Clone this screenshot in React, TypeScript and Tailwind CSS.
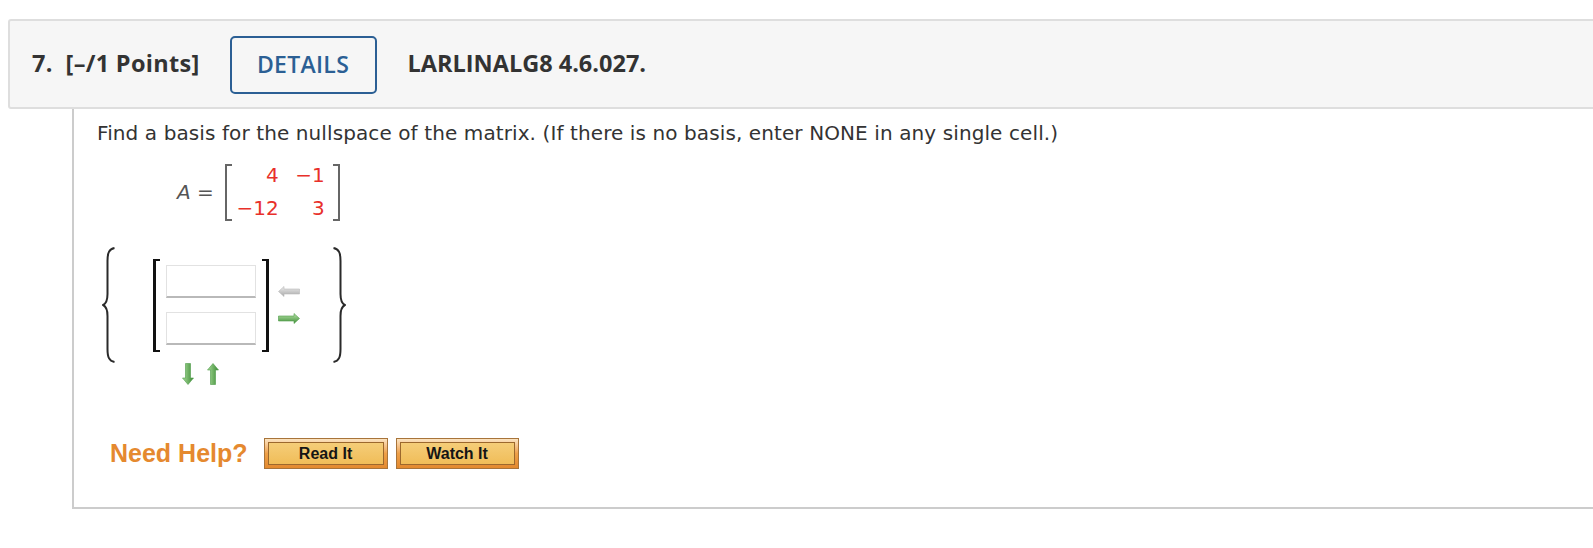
import React from "react";

function LeftBrace() {
  return (
    <svg width="14" height="116" viewBox="0 0 14 116" className="block">
      <path
        d="M12.5,1 C7,2 5.5,6 5.5,14 L5.5,47 C5.5,54 4,56.5 1.2,58 C4,59.5 5.5,62 5.5,69 L5.5,102 C5.5,110 7,114 12.5,115"
        fill="none"
        stroke="#2a2a2a"
        strokeWidth="2"
      />
    </svg>
  );
}

function RightBrace() {
  return (
    <svg width="14" height="116" viewBox="0 0 14 116" className="block">
      <path
        d="M1.5,1 C7,2 8.5,6 8.5,14 L8.5,47 C8.5,54 10,56.5 12.8,58 C10,59.5 8.5,62 8.5,69 L8.5,102 C8.5,110 7,114 1.5,115"
        fill="none"
        stroke="#2a2a2a"
        strokeWidth="2"
      />
    </svg>
  );
}

function ArrowLeftGray() {
  return (
    <svg width="22" height="11" viewBox="0 0 22 11" className="block">
      <defs>
        <linearGradient id="gg" x1="0" y1="0" x2="0" y2="1">
          <stop offset="0" stopColor="#ececec" />
          <stop offset="1" stopColor="#a9a9a9" />
        </linearGradient>
      </defs>
      <path d="M0.5,5.5 L6,0.5 L6,3 L21.5,3 L21.5,8 L6,8 L6,10.5 Z" fill="url(#gg)" stroke="#b8b8b8" strokeWidth="0.6" />
    </svg>
  );
}

function ArrowRightGreen() {
  return (
    <svg width="22" height="11" viewBox="0 0 22 11" className="block">
      <defs>
        <linearGradient id="gr" x1="0" y1="0" x2="0" y2="1">
          <stop offset="0" stopColor="#b9e3a9" />
          <stop offset="1" stopColor="#3f9038" />
        </linearGradient>
      </defs>
      <path d="M21.5,5.5 L16,0.5 L16,3 L0.5,3 L0.5,8 L16,8 L16,10.5 Z" fill="url(#gr)" stroke="#4e9a48" strokeWidth="0.6" />
    </svg>
  );
}

function ArrowDownGreen() {
  return (
    <svg width="12" height="22" viewBox="0 0 12 22" className="block">
      <defs>
        <linearGradient id="gd" x1="0" y1="0" x2="1" y2="0">
          <stop offset="0" stopColor="#a8dc98" />
          <stop offset="1" stopColor="#3c8a35" />
        </linearGradient>
      </defs>
      <path d="M6,21.5 L0.5,15 L3.5,15 L3.5,0.5 L8.5,0.5 L8.5,15 L11.5,15 Z" fill="url(#gd)" stroke="#4e9a48" strokeWidth="0.6" />
    </svg>
  );
}

function ArrowUpGreen() {
  return (
    <svg width="12" height="22" viewBox="0 0 12 22" className="block">
      <defs>
        <linearGradient id="gu" x1="0" y1="0" x2="1" y2="0">
          <stop offset="0" stopColor="#a8dc98" />
          <stop offset="1" stopColor="#3c8a35" />
        </linearGradient>
      </defs>
      <path d="M6,0.5 L0.5,7 L3.5,7 L3.5,21.5 L8.5,21.5 L8.5,7 L11.5,7 Z" fill="url(#gu)" stroke="#4e9a48" strokeWidth="0.6" />
    </svg>
  );
}

function HelpButton({ label, w }: { label: string; w: string }) {
  return (
    <div className={`${w} h-[31px] border border-[#a8743a] bg-linear-to-b from-[#fbe3c0] via-[#eea048] to-[#e3892e] p-[3px]`}>
      <div className="h-full w-full border border-[#9c682d] bg-linear-to-b from-[#f5cd78] to-[#f0bd58] flex items-center justify-center text-[16px] font-bold text-[#151515] font-['Liberation_Sans',Arial,sans-serif]">
        {label}
      </div>
    </div>
  );
}

export default function App() {
  return (
    <div className="w-[1593px] h-[548px] overflow-hidden bg-white">
      <div className="pt-[19px] pl-[8px]">
        <div className="w-[1600px] h-[90px] bg-[#f6f6f6] border-2 border-[#dedede] rounded-[3px] flex items-center pl-[22px] font-['Open_Sans',sans-serif]">
          <span className="text-[23.5px] tracking-[0.3px] font-bold text-[#333] whitespace-pre">7.  [–/1 Points]</span>
          <div className="ml-[30px] w-[147px] h-[58px] mt-[1px] border-2 border-[#2b5f94] rounded-[5px] flex items-center justify-center text-[23px] tracking-[0.3px] font-semibold text-[#2b5f94]">
            DETAILS
          </div>
          <span className="ml-[31px] text-[23.5px] font-bold text-[#333]">LARLINALG8 4.6.027.</span>
        </div>
      </div>
      <div className="ml-[72px] w-[1600px] h-[400px] border-l-2 border-b-2 border-[#cccccc] pl-[23px] font-['DejaVu_Sans',Verdana,sans-serif] text-[#333]">
        <p className="pt-[12px] text-[20px] leading-[24px] tracking-[0.1px]">
          Find a basis for the nullspace of the matrix. (If there is no basis, enter NONE in any single cell.)
        </p>
        <div className="mt-[14px] h-[66px] flex items-center pl-[80px] text-[20px]">
          <span className="text-[#555]">
            <i>A</i> =
          </span>
          <div className="ml-[11px] w-[7px] h-[57px] border-l-2 border-y-2 border-[#666]" />
          <div className="ml-[3px] grid grid-cols-[44px_46px] text-right text-[#e8302a] leading-[33px]">
            <span>4</span>
            <span>−1</span>
            <span>−12</span>
            <span>3</span>
          </div>
          <div className="ml-[8px] w-[7px] h-[57px] border-r-2 border-y-2 border-[#666]" />
        </div>
        <div className="mt-[22px] h-[116px] flex items-center">
          <div className="ml-[5px]">
            <LeftBrace />
          </div>
          <div className="ml-[37px] w-[7px] h-[93px] border-l-[3px] border-y-2 border-[#111]" />
          <div className="ml-[6px] flex flex-col gap-[14px]">
            <div className="w-[90px] h-[33px] bg-white border border-[#e2e2e2] border-b-2 border-b-[#b9b9b9]" />
            <div className="w-[90px] h-[33px] bg-white border border-[#e2e2e2] border-b-2 border-b-[#b9b9b9]" />
          </div>
          <div className="ml-[6px] w-[7px] h-[93px] border-r-[3px] border-y-2 border-[#111]" />
          <div className="ml-[9px] flex flex-col gap-[16px]">
            <ArrowLeftGray />
            <ArrowRightGreen />
          </div>
          <div className="ml-[32px]">
            <RightBrace />
          </div>
        </div>
        <div className="flex items-start pl-[85px]">
          <ArrowDownGreen />
          <div className="ml-[13px]">
            <ArrowUpGreen />
          </div>
        </div>
        <div className="mt-[53px] flex items-center pl-[13px]">
          <span className="text-[25px] font-bold text-[#e5892f] font-['Liberation_Sans',Arial,sans-serif] leading-[31px]">
            Need Help?
          </span>
          <div className="ml-[16px]">
            <HelpButton label="Read It" w="w-[124px]" />
          </div>
          <div className="ml-[8px]">
            <HelpButton label="Watch It" w="w-[123px]" />
          </div>
        </div>
      </div>
    </div>
  );
}
